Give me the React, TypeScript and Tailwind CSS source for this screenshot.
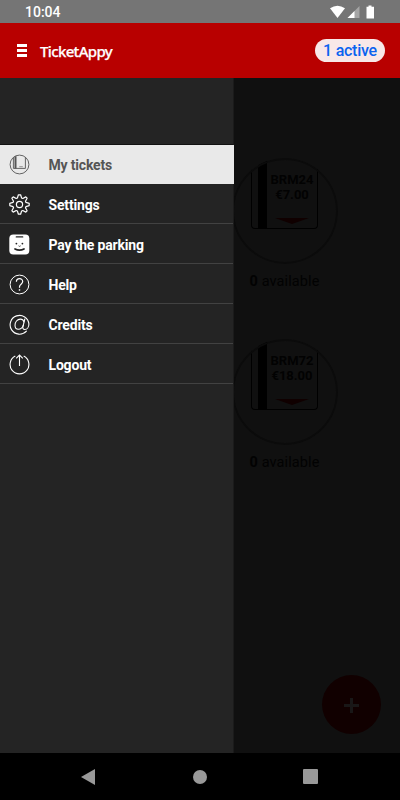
import type { ReactNode } from "react";

const MENU: { label: string; icon: ReactNode; active?: boolean }[] = [
  { label: "My tickets", icon: <TicketIcon />, active: true },
  { label: "Settings", icon: <GearIcon /> },
  { label: "Pay the parking", icon: <ParkingIcon /> },
  { label: "Help", icon: <HelpIcon /> },
  { label: "Credits", icon: <CreditsIcon /> },
  { label: "Logout", icon: <LogoutIcon /> },
];

const TICKETS = [
  { code: "BRM24", price: "€7.00", available: 0 },
  { code: "BRM72", price: "€18.00", available: 0 },
];

export default function App() {
  return (
    <div className="flex h-[800px] w-[400px] flex-col overflow-hidden bg-black font-[Roboto,sans-serif]">
      <StatusBar />
      <Header />
      <main className="relative h-[675px] shrink-0 overflow-hidden bg-[#101010]">
        <div className="flex flex-col gap-[49px] pt-20 pl-[222px]">
          {TICKETS.map((t) => (
            <Ticket key={t.code} {...t} />
          ))}
        </div>
        <Drawer />
        <button
          aria-label="Buy ticket"
          className="absolute right-[19.5px] bottom-[19px] flex size-[59px] items-center justify-center rounded-full bg-[#110000]"
        >
          <svg width="16" height="16" viewBox="0 0 16 16" stroke="#191717" strokeWidth="3">
            <path d="M8.5 1v15M1 8.5h15" />
          </svg>
        </button>
      </main>
      <NavBar />
    </div>
  );
}

function StatusBar() {
  return (
    <div className="flex h-[23px] shrink-0 items-center justify-between bg-[#757575] pr-[25px] pl-[25px] text-white">
      <span className="text-[14px] leading-none font-medium">10:04</span>
      <svg width="45" height="14" viewBox="0 0 45 14" fill="#fff">
        <path d="M0 3.3Q7.5-2 15 3.3L7.5 12.9z" />
        <path d="M29.5 1v12H17.5z" opacity=".35" />
        <path d="M24.5 6v7h-7z" />
        <path d="M38.5.5h3v1.3H44V13.5h-7.5V1.8h2z" />
      </svg>
    </div>
  );
}

function Header() {
  return (
    <header className="flex h-[55px] shrink-0 items-center bg-[#b80000] pr-[15px] pl-[17px] text-white">
      <button aria-label="Menu" className="flex w-[10px] flex-col gap-[2px]">
        <span className="h-[3px] bg-white" />
        <span className="h-[3px] bg-white" />
        <span className="h-[3px] bg-white" />
      </button>
      <span className="ml-[13px] font-['Noto_Sans',sans-serif] text-[15px] leading-5 font-medium tracking-[-0.65px] [-webkit-text-stroke:0.25px_white]">
        TicketAppy
      </span>
      <span className="ml-auto flex h-[23px] w-[70px] items-center justify-center rounded-full bg-[#f8e8e8] pt-px text-[16px] font-medium tracking-[-0.25px] text-[#0a63f0]">
        1 active
      </span>
    </header>
  );
}

function Drawer() {
  return (
    <nav className="absolute inset-y-0 left-0 w-[234px] border-r border-[#1b1b1b] bg-[#242424] pt-[66px]">
      <ul className="border-t border-[#111]">
        {MENU.map((item) => (
          <li
            key={item.label}
            className={
              item.active
                ? "-mr-px flex h-[39px] items-center bg-[#e9e9e9] pl-[9px] text-[#555]"
                : "flex h-10 items-center border-b border-[#424242] pt-[2px] pl-[9px] text-white"
            }
          >
            <span className="w-[39.5px] shrink-0">{item.icon}</span>
            <span className="text-[14px] leading-5 font-bold tracking-[-0.18px]">{item.label}</span>
          </li>
        ))}
      </ul>
    </nav>
  );
}

type TicketProps = { code: string; price: string; available: number };

function Ticket({ code, price, available }: TicketProps) {
  return (
    <div className="flex h-[132px] w-[125px] flex-col items-center">
      <div className="relative flex size-[106px] shrink-0 justify-center overflow-hidden rounded-full">
        <div className="flex h-[71px] w-[67px] rounded-b-[4px] border-[1.5px] border-t-0 border-black">
          <div className="ml-1.5 w-[9px] shrink-0 bg-black" />
          <div className="flex flex-1 flex-col items-center pt-[14px] text-[13px] leading-[15px] font-bold text-[#020202]">
            <span className="whitespace-nowrap">{code}</span>
            <span>{price}</span>
            <svg className="mt-[16px]" width="34" height="6" viewBox="0 0 34 6" fill="#100000">
              <path d="M0 0h34L17 6z" />
            </svg>
          </div>
        </div>
        <div className="absolute inset-0 rounded-full border-2 border-[#0b0b0b]" />
      </div>
      <p className="mt-[9px] text-[14.5px] leading-[18px] tracking-[0.1px] text-[#020202]">
        <b>{available}</b> available
      </p>
    </div>
  );
}

function NavBar() {
  return (
    <div className="flex flex-1 items-center justify-between bg-black pr-[82px] pl-[81px]">
      <svg width="14" height="16" viewBox="0 0 14 16" fill="#999">
        <path d="M14 0v16L0 8z" />
      </svg>
      <span className="ml-px size-[14px] rounded-full bg-[#999]" />
      <span className="size-[15px] rounded-[1px] bg-[#999]" />
    </div>
  );
}

function TicketIcon() {
  return (
    <svg width="21" height="21" viewBox="0 0 21 21" fill="none" stroke="#555" strokeWidth=".9">
      <circle cx="10.5" cy="10.5" r="9.4" />
      <path d="M4.4 3.8v10.6h12V3.5" />
      <path d="M6.5 2.2v12.3" strokeWidth="2" />
      <path d="M10.3 12.7h3.5" strokeWidth=".6" />
    </svg>
  );
}

function GearIcon() {
  return (
    <svg width="21" height="21" viewBox="0 0 21 21" fill="none" stroke="#fff" strokeWidth="1.2" strokeLinejoin="round">
      <circle cx="10.5" cy="10.5" r="3.1" />
      <path d="M8.4 4 9.4.8h2.2l1 3.2 1.2.5 3-1.6 1.3 1.3-1.6 3 .5 1.2 3.2 1v2.2l-3.2 1-.5 1.2 1.6 3-1.3 1.3-3-1.6-1.2.5-1 3.2H9.4l-1-3.2-1.2-.5-3 1.6-1.3-1.3 1.6-3-.5-1.2-3.2-1V9.4l3.2-1 .5-1.2-1.6-3 1.3-1.3 3 1.6z" />
    </svg>
  );
}

function ParkingIcon() {
  return (
    <svg width="21" height="21" viewBox="0 0 21 21">
      <rect x=".3" y=".5" width="20" height="20" rx="4" fill="#fff" />
      <g fill="none" stroke="#242424" strokeLinecap="round">
        <path d="M7.3 2.9h6.4" strokeWidth="1.3" />
        <path d="M6 14.9q4.5 2.4 9 0" strokeWidth="1.7" />
        <path d="m9.9 12 .7.4.7-.4" strokeWidth=".8" />
      </g>
      <circle cx="7.4" cy="9.6" r=".9" fill="#242424" />
      <circle cx="13.4" cy="9.6" r=".9" fill="#242424" />
    </svg>
  );
}

function HelpIcon() {
  return (
    <svg width="21" height="21" viewBox="0 0 21 21" fill="none" stroke="#fff" strokeWidth="1">
      <circle cx="10.5" cy="10.5" r="9.4" />
      <path d="M7.4 7.8c0-4.1 6.3-4.1 6.3-.2 0 2.6-3.2 2.7-3.2 5.2v1" strokeWidth="1.2" />
      <path d="M10.5 15.2v1.5" strokeWidth="1.4" />
    </svg>
  );
}

function CreditsIcon() {
  return (
    <svg width="21" height="21" viewBox="0 0 21 21" fill="none" stroke="#fff" strokeWidth="1.1" strokeLinecap="round">
      <path d="M17.4 17.2A9.4 9.4 0 1 1 19.9 10c0 3.3-1.9 5.5-4.1 5.5-1.8 0-2.3-1.3-1.8-3.2L15.8 5" />
      <path d="M14.9 7.9c-.5-1.9-1.8-2.8-3.5-2.8-3.2 0-5.4 3-5.4 6.1 0 2.5 1.3 4.1 3.4 4.1 2.4 0 4.2-1.7 5-4.1" />
    </svg>
  );
}

function LogoutIcon() {
  return (
    <svg width="21" height="21" viewBox="0 0 21 21" fill="none" stroke="#fff" strokeWidth="1.1">
      <path d="M6.3 2.1a9.4 9.4 0 1 0 8.4 0" />
      <path d="M10.5 12V1M7.2 4.3 10.5 1l3.3 3.3" />
    </svg>
  );
}
